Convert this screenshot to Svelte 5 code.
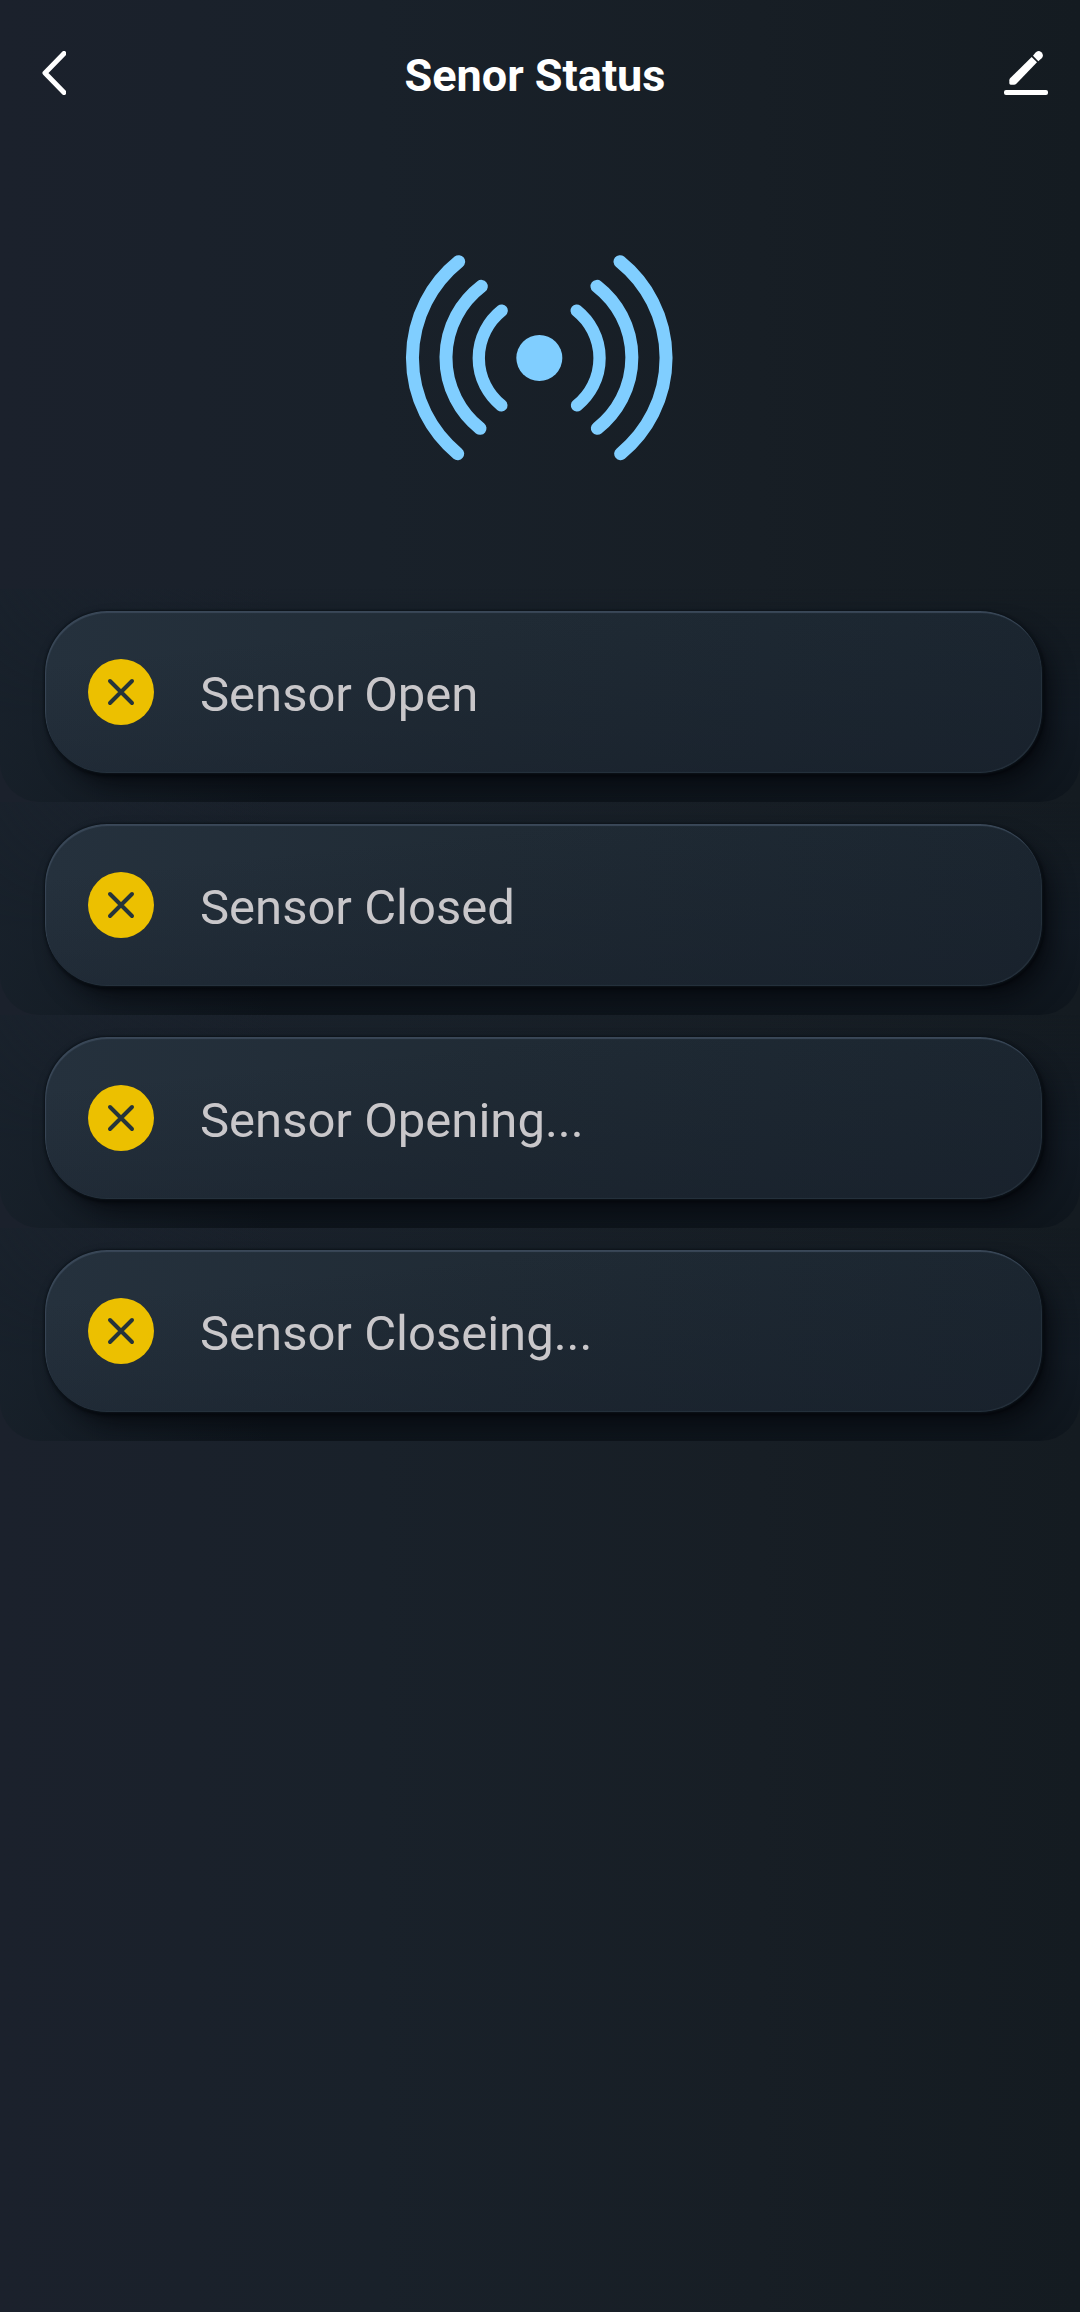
<script lang="ts">
  const states = ['Sensor Open', 'Sensor Closed', 'Sensor Opening...', 'Sensor Closeing...'];
</script>

<main class="screen">
  <header class="bar">
    <button class="icon-button" type="button" aria-label="Back">
      <svg width="24" height="44" viewBox="0 0 24 44" aria-hidden="true">
        <path d="M22 2.500 3 22 22 41.500" fill="none" stroke="#fff" stroke-width="5" stroke-linecap="round" stroke-linejoin="round" />
      </svg>
    </button>
    <h1>Senor Status</h1>
    <button class="icon-button" type="button" aria-label="Edit">
      <svg width="44" height="44" viewBox="0 0 132 132" fill="#fff" aria-hidden="true">
        <path d="M83 18 99 34 37 98Q34 101 30 101H20Q16 101 16 97V88Q16 84 19 81Z" />
        <path d="M87 14 94 5Q103-4 112 4 121 13 113 22L103 31Z" />
        <rect x="0" y="117" width="132" height="15" rx="6" />
      </svg>
    </button>
  </header>

  <div class="hero">
    <svg width="300" height="230" viewBox="0 0 900 690" role="img" aria-label="Sensor signal">
      <g fill="none" stroke="#80ceff" stroke-width="39" stroke-linecap="round">
        <path d="M206 65A371 371 0 0 0 203 641" />
        <path d="M274 139A270 270 0 0 0 270 565" />
        <path d="M335 212A182 182 0 0 0 334 496" stroke-width="37" />
        <path d="M560 212A182 182 0 0 1 561 496" stroke-width="37" />
        <path d="M621 139A270 270 0 0 1 622 565" />
        <path d="M690 65A371 371 0 0 1 692 641" />
      </g>
      <circle cx="448" cy="354" r="69" fill="#80ceff" />
    </svg>
  </div>

  <ul class="list">
    {#each states as label}
      <li class="tile">
        <div class="pill">
          <svg class="badge" width="66" height="66" viewBox="0 0 66 66" aria-hidden="true">
            <circle cx="33" cy="33" r="33" fill="#ecc000" />
            <path d="M22 22 44 44M44 22 22 44" fill="none" stroke="#25343a" stroke-width="4" stroke-linecap="round" />
          </svg>
          <span class="label">{label}</span>
        </div>
      </li>
    {/each}
  </ul>
</main>

<style>
  :global(body) {
    margin: 0;
    background: #171e26;
  }

  .screen {
    box-sizing: border-box;
    min-height: 100vh;
    background: linear-gradient(90deg, #1b212c 0%, #19212a 35%, #171e25 70%, #141b21 100%);
    font-family: Roboto, sans-serif;
  }

  .bar {
    display: flex;
    align-items: center;
    height: 146px;
    padding: 0 32px 0 42px;
  }

  .icon-button {
    display: flex;
    padding: 0;
    border: 0;
    background: none;
    cursor: pointer;
  }

  h1 {
    flex: 1;
    margin: 0;
    padding-top: 5px;
    color: #fff;
    font-size: 45px;
    font-weight: 700;
    line-height: 52px;
    text-align: center;
  }

  .hero {
    display: flex;
    justify-content: center;
    padding: 94px 0 119px;
  }

  .list {
    margin: 0;
    padding: 0;
    list-style: none;
  }

  .tile {
    overflow: hidden;
    padding: 22px 38px 29px 45px;
    border-radius: 0 0 40px 40px;
    background:
      linear-gradient(90deg, #19222ccc 0%, #19222c00 25%),
      linear-gradient(180deg, #17202900 0%, #121a23 60%, #0e151c 100%);
  }

  .pill {
    box-sizing: border-box;
    display: flex;
    align-items: center;
    gap: 46px;
    height: 162px;
    padding: 0 43px;
    border-radius: 62px;
    background:
      linear-gradient(174deg, #171f2a00 20%, #171f2aaa 100%),
      linear-gradient(90deg, #25313d 0%, #202b35 45%, #1c2731 100%);
    box-shadow:
      inset 1px 2px 1px #3a4858,
      inset -1px -1px 1px #26323d,
      0 0 2px 1px #0d141b,
      12px 16px 24px -4px #05080ccc,
      2px 3px 4px #04070a;
  }

  .label {
    padding-top: 6px;
    color: #c9c7ca;
    font-size: 49px;
    line-height: 56px;
  }
</style>
